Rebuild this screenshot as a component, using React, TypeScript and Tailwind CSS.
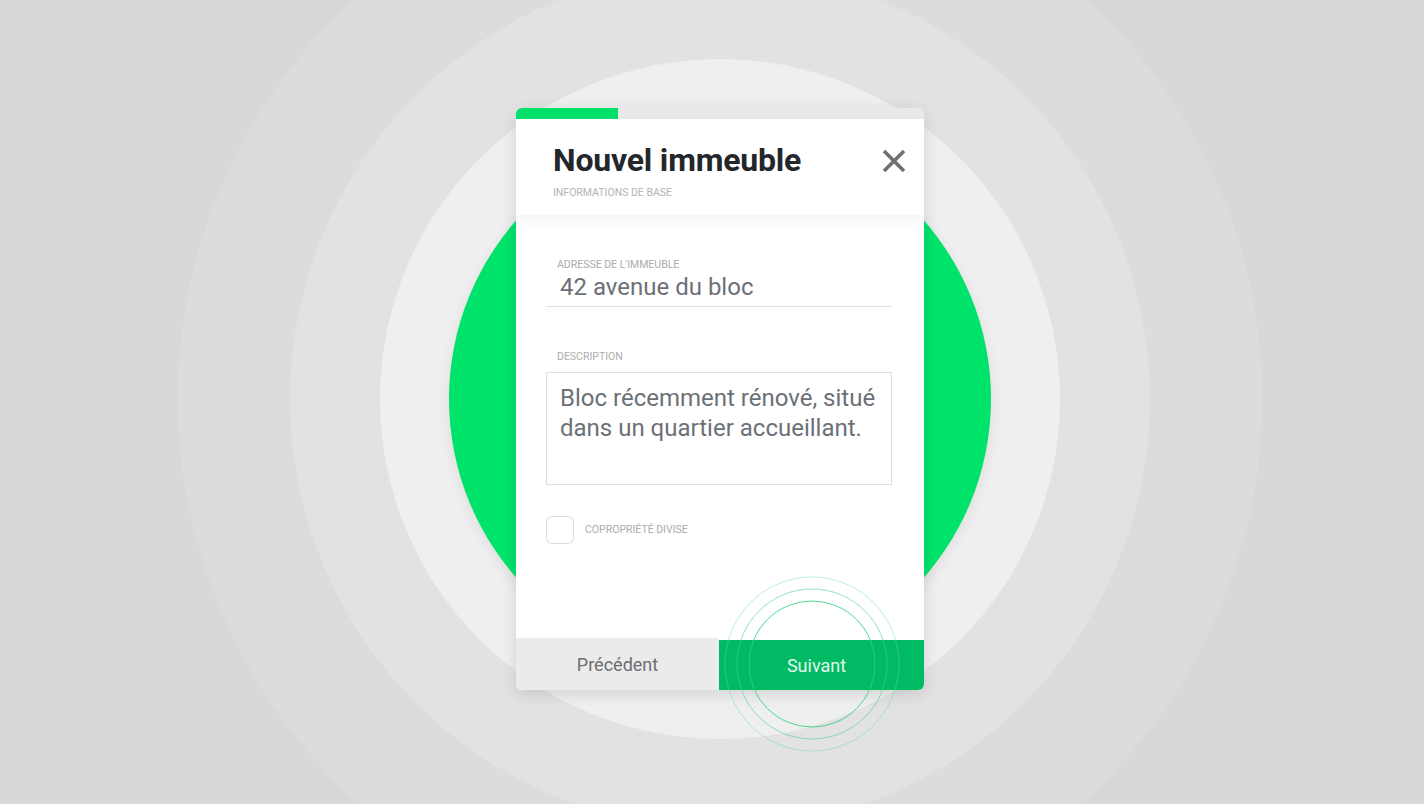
import React from 'react';

function CloseIcon() {
  return (
    <svg width="24" height="24" viewBox="0 0 24 24" className="block">
      <path d="M2 2 L22 22 M22 2 L2 22" stroke="#6d7075" strokeWidth="3.6" strokeLinecap="butt" />
    </svg>
  );
}

function Ripple() {
  return (
    <svg
      width="190"
      height="190"
      viewBox="0 0 190 190"
      className="absolute left-[201px] top-[461px] pointer-events-none"
    >
      <circle cx="95" cy="95" r="63" fill="none" stroke="#2fcf82" strokeOpacity="0.85" strokeWidth="1" />
      <circle cx="95" cy="95" r="75" fill="none" stroke="#45d48f" strokeOpacity="0.6" strokeWidth="1" />
      <circle cx="95" cy="95" r="87" fill="none" stroke="#6adca5" strokeOpacity="0.45" strokeWidth="1" />
    </svg>
  );
}

export default function App() {
  return (
    <div className="relative w-full h-[804px] overflow-hidden bg-[#d8d8d8] font-['Roboto',sans-serif]">
      {/* background rings */}
      <div className="absolute left-[178px] top-[-143px] w-[1084px] h-[1084px] rounded-full bg-[#dcdcdc]" />
      <div className="absolute left-[290px] top-[-31px] w-[860px] h-[860px] rounded-full bg-[#e2e2e2]" />
      <div className="absolute left-[380px] top-[59px] w-[680px] h-[680px] rounded-full bg-[#efefef]" />
      <div className="absolute left-[449px] top-[128px] w-[542px] h-[542px] rounded-full bg-[#00e36b] shadow-[0_4px_14px_rgba(0,0,0,0.08)]" />

      <div className="relative z-10 flex justify-center pl-[16px] pt-[108px]">
        <div className="relative w-[408px]">
          <div className="flex flex-col h-[582px] rounded-[6px] bg-white overflow-hidden shadow-[0_4px_16px_rgba(0,0,0,0.12)]">
            {/* progress */}
            <div className="h-[11px] bg-[#e9e9ea] shrink-0">
              <div className="h-full w-[102px] bg-[#00e06a]" />
            </div>

            {/* header */}
            <div className="relative z-10 h-[96px] shrink-0 flex justify-between pl-[37px] pr-[18px] pt-[22px] bg-white shadow-[0_5px_12px_rgba(0,0,0,0.05)]">
              <div>
                <h1 className="text-[32px] leading-[38px] font-bold text-[#23272c] tracking-[-0.2px]">Nouvel immeuble</h1>
                <p className="mt-[8px] text-[10.5px] leading-[12px] text-[#b3b3b3]">INFORMATIONS DE BASE</p>
              </div>
              <div className="pt-[8px]">
                <CloseIcon />
              </div>
            </div>

            {/* body */}
            <div className="flex-1 pl-[30px] pr-[32px] pt-[44px]">
              <div className="border-b border-[#e0e0e0] pb-[5px]">
                <p className="pl-[11px] text-[10.5px] leading-[12px] text-[#ababab]">ADRESSE DE L'IMMEUBLE</p>
                <p className="mt-[2px] pl-[14px] text-[24px] leading-[28px] text-[#6c7077]">42 avenue du bloc</p>
              </div>

              <p className="mt-[44px] pl-[11px] text-[10.5px] leading-[12px] text-[#ababab]">DESCRIPTION</p>
              <div className="mt-[9px] h-[113px] border border-[#dedede] pl-[13px] pt-[10px]">
                <p className="text-[24px] leading-[30px] text-[#6c7077]">
                  Bloc récemment rénové, situé
                  <br />
                  dans un quartier accueillant.
                </p>
              </div>

              <div className="mt-[31px] flex items-center gap-[11px]">
                <div className="w-[28px] h-[28px] rounded-[6px] border border-[#dcdcdc]" />
                <span className="text-[10.5px] leading-[12px] text-[#ababab]">COPROPRIÉTÉ DIVISE</span>
              </div>
            </div>

            {/* footer */}
            <div className="h-[52px] shrink-0 flex">
              <button className="w-[203px] h-full bg-[#ebebec] text-[18px] text-[#6c6f74]">Précédent</button>
              <button className="flex-1 mt-[2px] h-[50px] pr-[10px] bg-[#00bb63] text-[18px] text-[#e3f7ec]">Suivant</button>
            </div>
          </div>
          <Ripple />
        </div>
      </div>
    </div>
  );
}
